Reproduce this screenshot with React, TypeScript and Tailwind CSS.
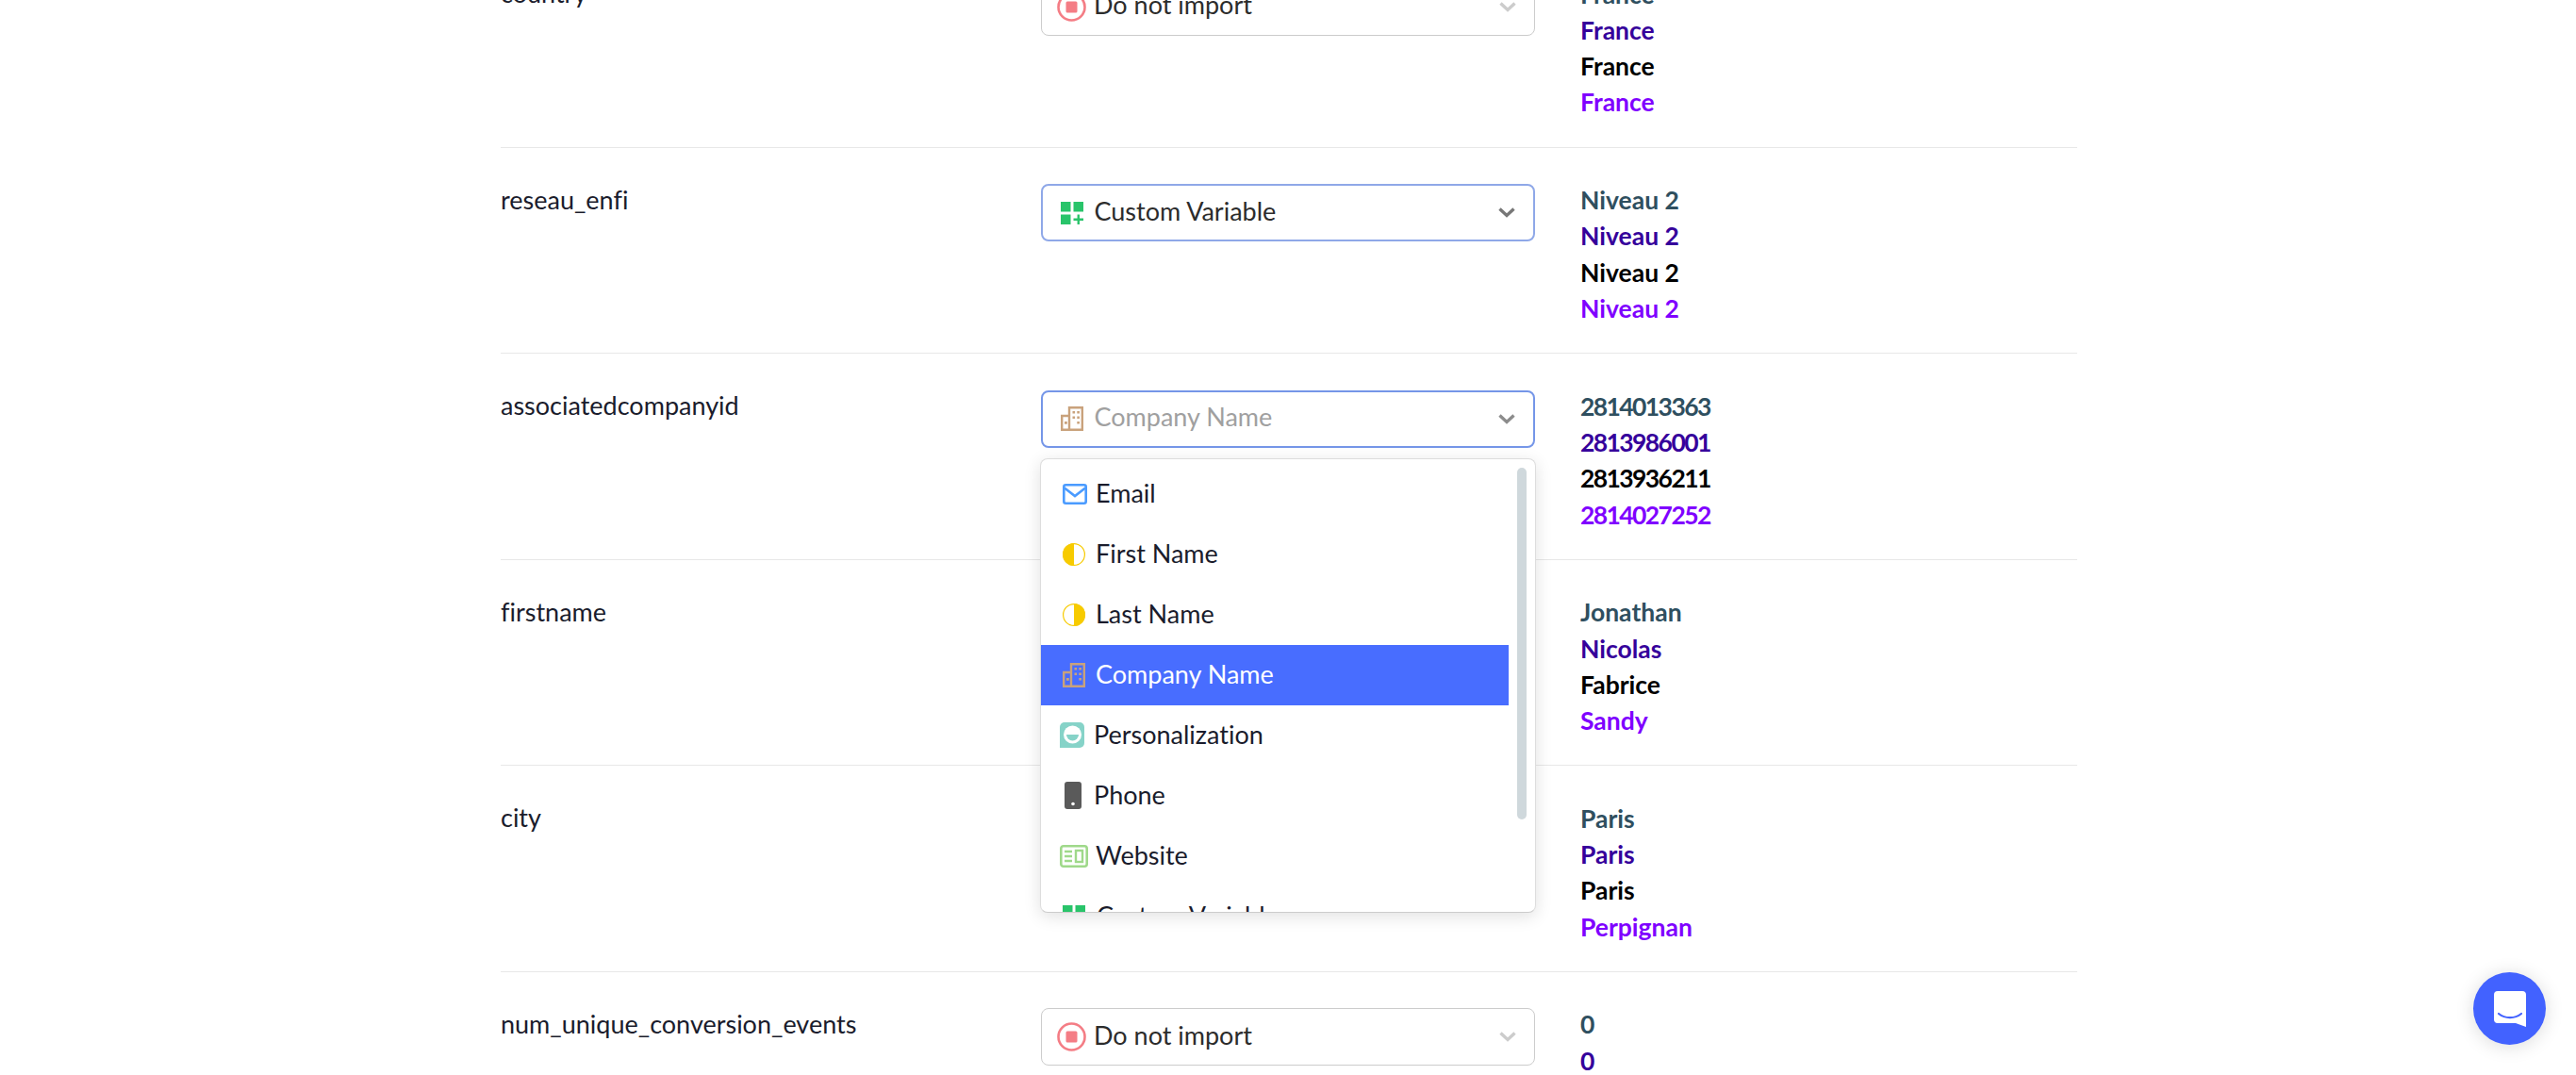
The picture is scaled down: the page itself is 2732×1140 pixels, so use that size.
import type { ReactNode } from 'react';

const MailIcon = () => (
  <svg viewBox="0 0 26 22" className="h-[22px] w-[26px] shrink-0" fill="none">
    <rect x="1.3" y="1.3" width="23.4" height="19.4" rx="2" stroke="#4a9bff" strokeWidth="2.6" />
    <path d="M2 4.5 13 13 24 4.500" stroke="#4a9bff" strokeWidth="2.6" />
  </svg>
);

const HalfCircleIcon = ({ side }: { side: 'left' | 'right' }) => (
  <svg viewBox="0 0 24 24" className="h-6 w-6 shrink-0" fill="none">
    <circle cx="12" cy="12" r="11.4" stroke="#f7cb00" strokeWidth="1.2" />
    <path d={side === 'left' ? 'M12 0a12 12 0 0 0 0 24Z' : 'M12 0a12 12 0 0 1 0 24Z'} fill="#f7cb00" />
  </svg>
);

const BuildingIcon = () => (
  <svg viewBox="0 0 24 26" className="h-[26px] w-6 shrink-0" fill="none">
    <path d="M9 10H1.200v14.800h21.600V1.200H9v23.600" stroke="#c9a27c" strokeWidth="2.400" />
    <path
      d="M12.500 5h2.600v2.600h-2.600zM17.300 5h2.600v2.600h-2.600zM17.300 10.500h2.600v2.600h-2.600zM17.300 16h2.600v2.600h-2.600zM12.500 10.500h2.600v2.600h-2.600zM4 16h2.800v2.800H4z"
      fill="#c9a27c"
    />
  </svg>
);

const PersonalizationIcon = () => (
  <svg viewBox="0 0 26 27" className="h-[27px] w-[26px] shrink-0">
    <path d="M5 0h16a5 5 0 0 1 5 5v17a5 5 0 0 1-5 5H0V5a5 5 0 0 1 5-5Z" fill="#86d3c8" />
    <circle cx="13.500" cy="13" r="9.500" fill="#fff" />
    <path d="M7 13h13a6.500 6.500 0 0 1-13 0Z" fill="#86d3c8" />
  </svg>
);

const PhoneIcon = () => (
  <svg viewBox="0 0 18 29" className="h-[29px] w-[18px] shrink-0">
    <rect width="18" height="29" rx="3" fill="#5a5a5a" />
    <circle cx="9" cy="23.500" r="1.800" fill="#fff" />
  </svg>
);

const WebsiteIcon = () => (
  <svg viewBox="0 0 30 24" className="h-6 w-[30px] shrink-0" fill="none">
    <rect x="1.300" y="1.300" width="27.400" height="21.400" rx="2.500" stroke="#9fd98a" strokeWidth="2.600" />
    <path d="M5 7h8M5 12h8M5 17h8" stroke="#9fd98a" strokeWidth="2.400" />
    <rect x="17" y="6" width="7" height="12" stroke="#9fd98a" strokeWidth="2.400" />
  </svg>
);

const CustomIcon = () => (
  <svg viewBox="0 0 24 24" className="h-6 w-6 shrink-0">
    <path d="M0 0h10.500v10.500H0zM13.500 0H24v10.500H13.500zM0 13.500h10.500V24H0z" fill="#29c46a" />
    <path d="M18.750 13.500V24M13.500 18.750H24" stroke="#29c46a" strokeWidth="2.400" />
  </svg>
);

const StopIcon = () => (
  <svg viewBox="0 0 31 31" className="h-[31px] w-[31px] shrink-0" fill="none">
    <circle cx="15.500" cy="15.500" r="14" stroke="#f47d85" strokeWidth="2.600" />
    <rect x="9.500" y="9.500" width="12" height="12" rx="1.500" fill="#f47d85" />
  </svg>
);

const Chevron = ({ color }: { color: string }) => (
  <svg viewBox="0 0 18 11" className="h-[11px] w-[18px]" fill="none">
    <path d="M1.500 1.500 9 8.500l7.500-7" stroke={color} strokeWidth="3.400" />
  </svg>
);

interface SelectProps {
  icon: ReactNode;
  label: string;
  active?: boolean;
  placeholder?: boolean;
  chevron?: string;
}

const SelectBox = ({ icon, label, active, placeholder, chevron = '#cccccc' }: SelectProps) => (
  <div
    className={`flex h-[61px] w-[524px] items-center rounded-lg bg-white pr-[19px] ${
      active ? `border-2 ${placeholder ? 'border-[#7596e8]' : 'border-[#8fa8e8]'}` : 'border-[1.5px] border-[#cccccc] pl-[0.5px]'
    }`}
  >
    <div className="mr-[8px] ml-[15.5px] flex w-[31px] shrink-0 justify-center">{icon}</div>
    <span className={`mb-[3px] flex-1 text-[27px] ${placeholder ? 'text-[#a0a0a0]' : 'text-[#2c2c2c]'}`}>{label}</span>
    <Chevron color={chevron} />
  </div>
);

const options = [
  { icon: <MailIcon />, label: 'Email', iconWidth: 'w-[35px]', pad: 'pl-[23px]' },
  { icon: <HalfCircleIcon side="left" />, label: 'First Name', iconWidth: 'w-[35px]', pad: 'pl-[23px]' },
  { icon: <HalfCircleIcon side="right" />, label: 'Last Name', iconWidth: 'w-[35px]', pad: 'pl-[23px]' },
  { icon: <BuildingIcon />, label: 'Company Name', iconWidth: 'w-[35px]', pad: 'pl-[23px]', selected: true },
  { icon: <PersonalizationIcon />, label: 'Personalization', iconWidth: 'w-[36px]', pad: 'pl-[20px]' },
  { icon: <PhoneIcon />, label: 'Phone', iconWidth: 'w-[31px]', pad: 'pl-[25px]' },
  { icon: <WebsiteIcon />, label: 'Website', iconWidth: 'w-[38px]', pad: 'pl-[20px]' },
  { icon: <CustomIcon />, label: 'Custom Variable', iconWidth: 'w-[36px]', pad: 'pl-[23px]' },
];

const OptionsMenu = () => (
  <div className="absolute top-[72px] -left-[1px] z-10 flex h-[482px] w-[526px] overflow-hidden rounded-lg border-[1.5px] border-[#dddddd] border-b-[#cccccc] bg-white pt-[5px] shadow-[0_4px_18px_rgba(0,0,0,0.12)]">
    <div className="w-[496px] shrink-0">
      {options.map((o) => (
        <div
          key={o.label}
          className={`flex h-[64px] items-center text-[27px] ${o.pad} ${
            o.selected ? 'bg-[#486dff] text-white' : 'text-[#1a1c2c]'
          }`}
        >
          <div className={`flex shrink-0 ${o.iconWidth}`}>{o.icon}</div>
          <span className="mb-[1px]">{o.label}</span>
        </div>
      ))}
    </div>
    <div className="mt-[4px] ml-[9px] h-[373px] w-[10px] rounded-full bg-[#cfd8dc]" />
  </div>
);

interface RowData {
  name: string;
  icon: ReactNode;
  label: string;
  values: string[];
  active?: boolean;
  placeholder?: boolean;
  chevron?: string;
  menu?: boolean;
}

const rows: RowData[] = [
  { name: 'country', icon: <StopIcon />, label: 'Do not import', values: ['France', 'France', 'France', 'France'] },
  {
    name: 'reseau_enfi',
    icon: <CustomIcon />,
    label: 'Custom Variable',
    values: ['Niveau 2', 'Niveau 2', 'Niveau 2', 'Niveau 2'],
    active: true,
    chevron: '#777777',
  },
  {
    name: 'associatedcompanyid',
    icon: <BuildingIcon />,
    label: 'Company Name',
    values: ['2814013363', '2813986001', '2813936211', '2814027252'],
    active: true,
    placeholder: true,
    chevron: '#8c8c8c',
    menu: true,
  },
  {
    name: 'firstname',
    icon: <HalfCircleIcon side="left" />,
    label: 'First Name',
    values: ['Jonathan', 'Nicolas', 'Fabrice', 'Sandy'],
  },
  { name: 'city', icon: <StopIcon />, label: 'Do not import', values: ['Paris', 'Paris', 'Paris', 'Perpignan'] },
  { name: 'num_unique_conversion_events', icon: <StopIcon />, label: 'Do not import', values: ['0', '0', '0', '0'] },
];

const valueColors = ['text-[#2f4f5f]', 'text-[#35009b]', 'text-black', 'text-[#7f00ff]'];

export default function App() {
  return (
    <div className="relative h-[1140px] w-full overflow-hidden bg-white font-['Lato','Noto_Sans',sans-serif] [font-variant-ligatures:none]">
      <div className="-mt-[62px] ml-[531px] w-[1672px]">
        {rows.map((row, i) => (
          <div
            key={row.name}
            className={`flex h-[218.6px] ${i < rows.length - 1 ? 'border-b-[1.5px] border-[#e8e8e8]' : ''}`}
          >
            <div className="w-[573px] shrink-0 pt-[37px] text-[27px] leading-[36px] text-[#1a1c2c]">{row.name}</div>
            <div className="relative w-[524px] shrink-0 pt-[38.5px]">
              <div className="relative">
                <SelectBox
                  icon={row.icon}
                  label={row.label}
                  active={row.active}
                  placeholder={row.placeholder}
                  chevron={row.chevron}
                />
                {row.menu && <OptionsMenu />}
              </div>
            </div>
            <div className="ml-[48px] pt-[36.5px]">
              {row.values.map((v, j) => (
                <div
                  key={j}
                  className={`h-[38.300px] text-[26.5px] leading-[38px] font-bold ${valueColors[j]} ${
                    row.name === 'associatedcompanyid' ? 'tracking-[-1.6px]' : ''
                  }`}
                >
                  {v}
                </div>
              ))}
            </div>
          </div>
        ))}
      </div>
      <button className="absolute top-[1031px] left-[2623px] flex h-[77px] w-[77px] items-center justify-center rounded-full bg-[#4262ff] shadow-[0_2px_20px_rgba(0,0,0,0.14)]">
        <svg viewBox="0 0 34 38" className="h-[38px] w-[34px]">
          <path d="M4 0h26a4 4 0 0 1 4 4v34l-11-4H4a4 4 0 0 1-4-4V4a4 4 0 0 1 4-4Z" fill="#fff" />
          <path d="M5 24c7 5.500 17 5.500 24 0" fill="none" stroke="#4262ff" strokeWidth="2.200" strokeLinecap="round" />
        </svg>
      </button>
    </div>
  );
}
